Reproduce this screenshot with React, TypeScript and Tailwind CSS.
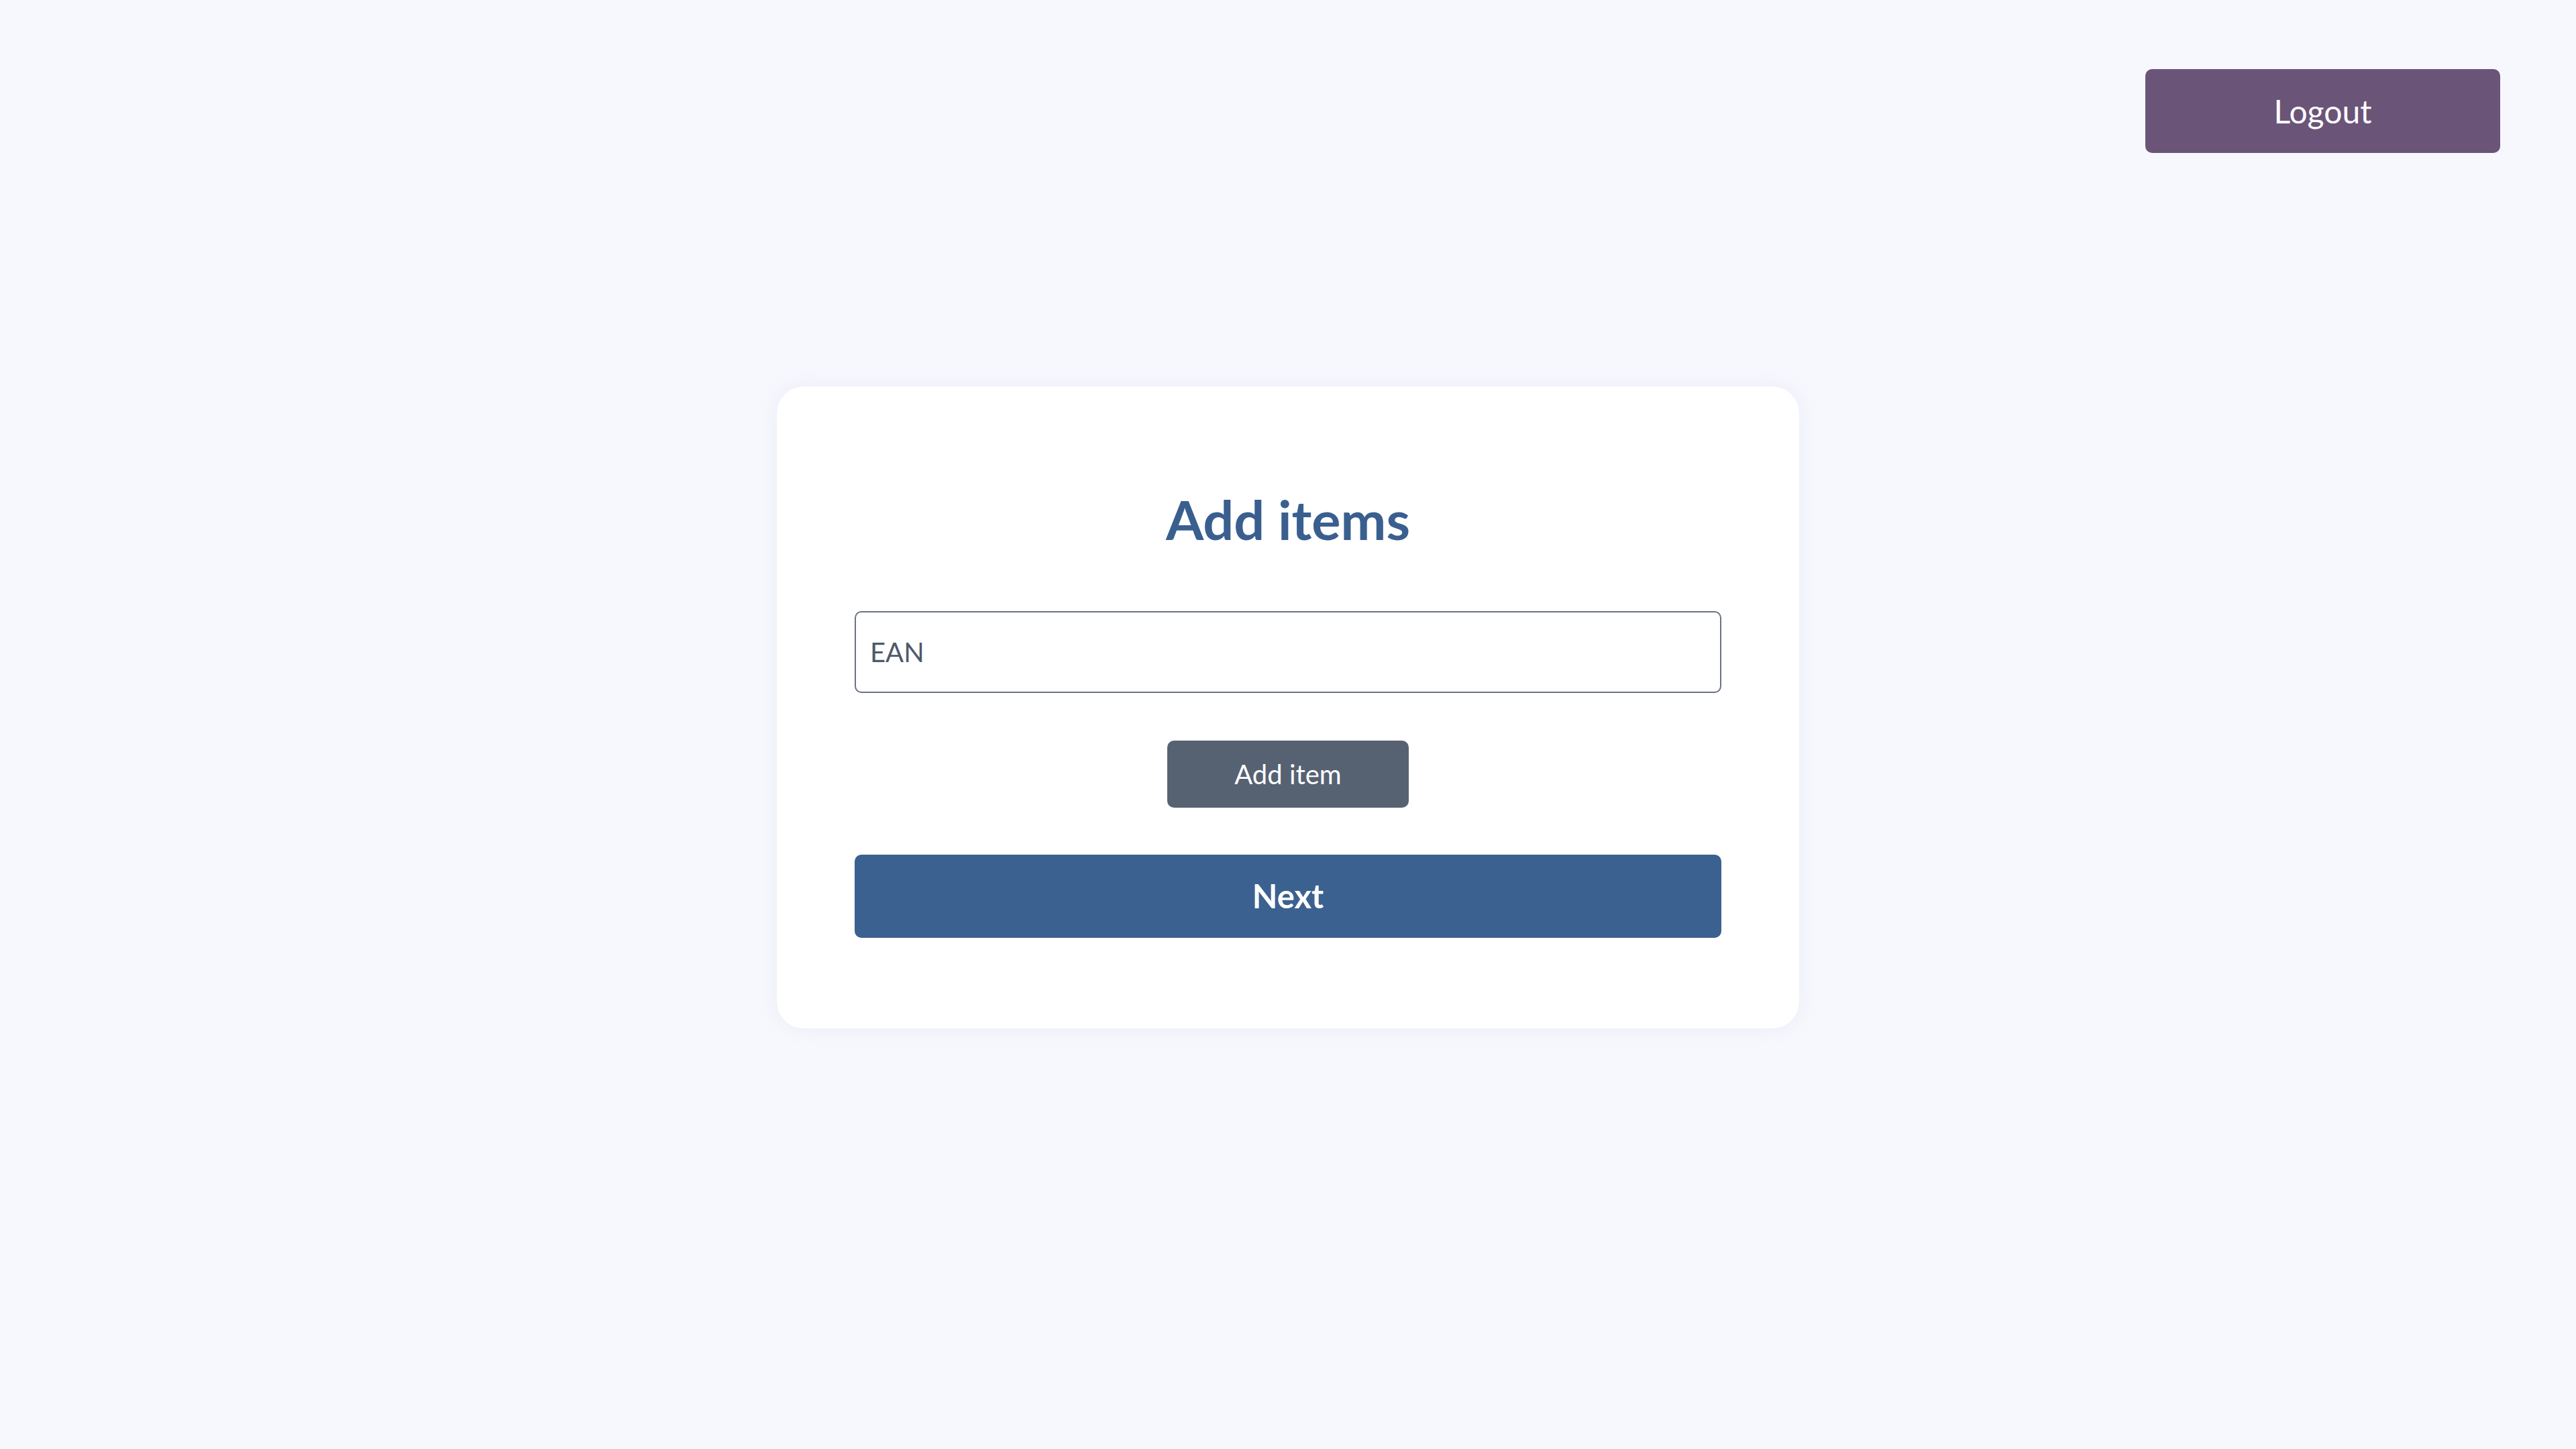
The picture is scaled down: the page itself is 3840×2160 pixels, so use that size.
import { useState } from "react";

export default function App() {
  const [ean, setEan] = useState("");
  const [items, setItems] = useState<string[]>([]);

  const handleAdd = () => {
    if (!ean.trim()) return;
    setItems((prev) => [...prev, ean.trim()]);
    setEan("");
  };

  return (
    <div
      className="min-h-screen w-full bg-[#f7f8fd]"
      style={{ fontFamily: "Lato, 'Open Sans', sans-serif" }}
    >
      {/* Header */}
      <div className="flex justify-end pt-[103px] pr-[113px]">
        <button
          type="button"
          className="w-[529px] h-[125px] rounded-[10px] bg-[#6a5579] text-white text-[48px]"
        >
          Logout
        </button>
      </div>

      {/* Card */}
      <div className="mx-auto mt-[348px] w-[1524px] rounded-[40px] bg-white px-[116px] pt-[150px] pb-[135px] shadow-[0_0_24px_rgba(200,205,230,0.25)]">
        <h1 className="text-center text-[81px] leading-[96px] font-bold text-[#3a5f8f]">
          Add items
        </h1>

        <input
          type="text"
          value={ean}
          onChange={(e) => setEan(e.target.value)}
          placeholder="EAN"
          className="mt-[89px] block w-full h-[122px] rounded-[10px] border-2 border-[#6b7280] px-[21px] text-[40px] text-[#4b5563] placeholder:text-[#4e596a] focus:outline-none"
        />

        <div className="flex justify-center mt-[71px]">
          <button
            type="button"
            onClick={handleAdd}
            className="w-[360px] h-[100px] rounded-[10px] bg-[#566272] text-white text-[40px]"
          >
            Add item
          </button>
        </div>

        <button
          type="button"
          className="mt-[70px] block w-full h-[124px] rounded-[10px] bg-[#3b6190] text-white text-[49px] font-bold"
        >
          Next
        </button>

        {items.length > 0 && <span className="hidden">{items.length}</span>}
      </div>
    </div>
  );
}
